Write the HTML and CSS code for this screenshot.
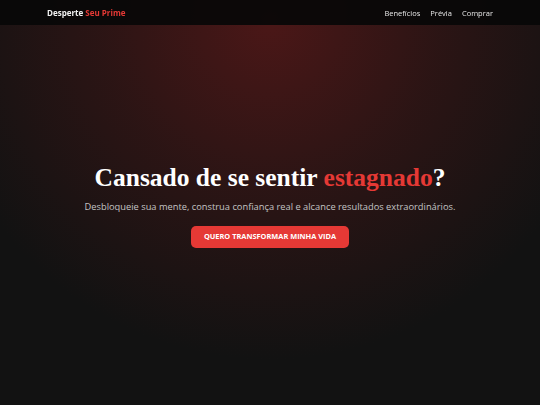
FILE: index.html
```html
<!DOCTYPE html>
<html lang="pt">
<head>
<meta charset="utf-8">
<link rel="stylesheet" href="styles.css">
</head>
<body>
<header class="topbar">
  <div class="topbar-inner">
    <div class="logo">Desperte <span class="accent">Seu Prime</span></div>
    <nav class="nav">
      <a href="#">Benefícios</a>
      <a href="#">Prévia</a>
      <a href="#">Comprar</a>
    </nav>
  </div>
</header>
<section class="hero">
  <div class="hero-content">
    <h1 class="title">Cansado de se sentir <span class="accent">estagnado</span>?</h1>
    <p class="subtitle">Desbloqueie sua mente, construa confiança real e alcance resultados extraordinários.</p>
    <a class="cta" href="#">QUERO TRANSFORMAR MINHA VIDA</a>
  </div>
</section>
</body>
</html>
```
FILE: styles.css
```css
* { box-sizing: border-box; }
html, body { margin: 0; padding: 0; }
body {
  background: #121212;
  color: #fff;
  font-family: "Open Sans", "Liberation Sans", sans-serif;
  width: 540px;
  height: 405px;
  overflow: hidden;
}
.topbar {
  position: fixed;
  top: 0; left: 0; right: 0;
  height: 25px;
  background: rgba(8, 8, 8, 0.92);
  z-index: 10;
}
.topbar-inner {
  height: 100%;
  padding: 0 47px;
  display: flex;
  align-items: center;
  justify-content: space-between;
}
.logo {
  font-size: 8px;
  font-weight: 700;
  color: #f2f2f2;
}
.accent { color: #e53935; }
.nav { display: flex; gap: 10px; }
.nav a {
  font-size: 7.5px;
  color: #e6e6e6;
  text-decoration: none;
}
.hero {
  height: 405px;
  display: flex;
  align-items: center;
  justify-content: center;
  background:
    radial-gradient(ellipse 340px 340px at 270px 20px, rgba(85, 24, 24, 0.85) 0%, rgba(60, 22, 22, 0.6) 50%, rgba(18, 18, 18, 0) 100%),
    #121212;
}
.hero-content {
  text-align: center;
  padding-top: 6px;
}
.title {
  margin: 0;
  font-family: "Liberation Serif", "DejaVu Serif", serif;
  font-size: 25.5px;
  font-weight: 700;
  color: #fff;
  line-height: 1.2;
}
.subtitle {
  margin: 6px 0 9px;
  font-size: 9.3px;
  color: #c4c4c4;
}
.cta {
  display: inline-block;
  background: #e53935;
  color: #fff;
  font-size: 7.4px;
  font-weight: 700;
  text-decoration: none;
  padding: 6.5px 13px;
  border-radius: 5px;
  line-height: 9px;
}
```
